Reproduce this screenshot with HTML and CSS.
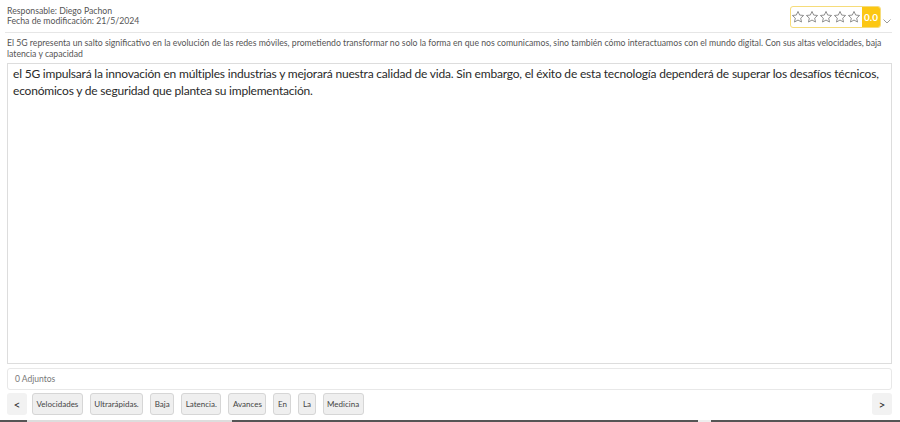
FILE: index.html
```html
<!DOCTYPE html>
<html lang="es">

<head>
    <meta charset="utf-8">
    <meta name="viewport" content="width=device-width, initial-scale=1.0">
    <title>Documento</title>
    <link rel="stylesheet" href="styles.css">
</head>

<body>
    <main class="ficha">
        <header class="cabecera">
            <div class="meta">
                <p>Responsable: Diego Pachon</p>
                <p>Fecha de modificación: 21/5/2024</p>
            </div>
            <div class="valoracion">
                <div class="estrellas">
                    <svg viewBox="0 0 24 24"><path d="M12 2.5l2.9 6.2 6.7.7-5 4.6 1.4 6.6L12 17.2l-6 3.4 1.4-6.6-5-4.6 6.7-.7z"/></svg>
                    <svg viewBox="0 0 24 24"><path d="M12 2.5l2.9 6.2 6.7.7-5 4.6 1.4 6.6L12 17.2l-6 3.4 1.4-6.6-5-4.6 6.7-.7z"/></svg>
                    <svg viewBox="0 0 24 24"><path d="M12 2.5l2.9 6.2 6.7.7-5 4.6 1.4 6.6L12 17.2l-6 3.4 1.4-6.6-5-4.6 6.7-.7z"/></svg>
                    <svg viewBox="0 0 24 24"><path d="M12 2.5l2.9 6.2 6.7.7-5 4.6 1.4 6.6L12 17.2l-6 3.4 1.4-6.6-5-4.6 6.7-.7z"/></svg>
                    <svg viewBox="0 0 24 24"><path d="M12 2.5l2.9 6.2 6.7.7-5 4.6 1.4 6.6L12 17.2l-6 3.4 1.4-6.6-5-4.6 6.7-.7z"/></svg>
                </div>
                <span class="nota">0.0</span>
            </div>
            <svg class="flecha" viewBox="0 0 10 10"><path d="M1.5 3.5l3.5 3.5 3.5-3.5"/></svg>
        </header>

        <p class="resumen">El 5G representa un salto significativo en la evolución de las redes móviles, prometiendo transformar no solo la forma en que nos comunicamos, sino también cómo interactuamos con el mundo digital. Con sus altas velocidades, baja latencia y capacidad</p>

        <div class="texto">el 5G impulsará la innovación en múltiples industrias y mejorará nuestra calidad de vida. Sin embargo, el éxito de esta tecnología dependerá de superar los desafíos técnicos, económicos y de seguridad que plantea su implementación.</div>

        <div class="adjuntos">0 Adjuntos</div>

        <nav class="etiquetas">
            <button class="paso">&lt;</button>
            <div class="lista">
                <button>Velocidades</button>
                <button>Ultrarápidas.</button>
                <button>Baja</button>
                <button>Latencia.</button>
                <button>Avances</button>
                <button>En</button>
                <button>La</button>
                <button>Medicina</button>
            </div>
            <button class="paso">&gt;</button>
        </nav>
    </main>
    <div class="kant"></div>
</body></html>
```

FILE: styles.css
```css
body {
    margin: 0;
    background-color: white;
    font-family: "Lato", "Noto Sans", sans-serif;
    color: #555;
}

.ficha {
    padding: 5px 8px 0 7px;
    height: 415px;
    box-sizing: border-box;
    display: flex;
    flex-direction: column;
}

.cabecera {
    display: flex;
    align-items: flex-start;
    border-bottom: 1px solid #e6e6e6;
    padding-bottom: 4px;
    margin-left: -2px;
    padding-left: 2px;
}

.meta {
    flex: 1;
    padding-top: 1px;
}

.meta p {
    margin: 0;
    font-size: 8.7px;
    line-height: 10px;
}

.valoracion {
    display: flex;
    margin-top: 1px;
    margin-right: 1px;
    border: 1px solid #f6dc7a;
    border-radius: 3px;
    height: 20px;
    overflow: hidden;
}

.estrellas {
    display: flex;
    align-items: center;
    padding: 0 1px 0 0;
}

.estrellas svg {
    width: 14px;
    height: 14px;
    fill: none;
    stroke: #888;
    stroke-width: 1.6;
    stroke-linejoin: round;
}

.nota {
    background-color: #fcc713;
    color: white;
    font-size: 10px;
    font-weight: bold;
    padding: 0 2px;
    line-height: 20px;
}

.flecha {
    width: 10px;
    height: 10px;
    margin-top: 11px;
    fill: none;
    stroke: #999;
    stroke-width: 1;
}

.resumen {
    margin: 4px 0 0;
    font-size: 8.7px;
    line-height: 11px;
}

.texto {
    flex: 1;
    margin-top: 4px;
    border: 1px solid #ddd;
    padding: 1px 5px;
    font-size: 12px;
    letter-spacing: -0.2px;
    line-height: 17px;
    color: #2a2a2a;
}

.adjuntos {
    margin-top: 4px;
    border: 1px solid #e8e8e8;
    border-radius: 3px;
    height: 20px;
    padding-left: 7px;
    font-size: 8.5px;
    line-height: 20px;
    color: #777;
}

.etiquetas {
    display: flex;
    justify-content: space-between;
    margin-top: 3px;
    height: 22px;
}

.lista {
    flex: 1;
    display: flex;
    gap: 7px;
    padding-left: 5px;
}

button {
    font-family: "Lato", sans-serif;
    font-size: 8px;
    color: #444;
    background-color: #efefef;
    border: 1px solid #d6d6d6;
    border-radius: 3px;
    padding: 0 3.5px;
    margin: 0;
}

.paso {
    width: 20px;
    border: none;
    background-color: #f2f2f2;
    font-size: 12px;
    color: #333;
}

.kant {
    height: 2px;
    margin-top: 5px;
    background: linear-gradient(to right, #555 27px, #ddd 27px, #ddd 232px, #555 232px, #555 698px, #eee 698px, #eee 711px, #555 711px);
}
```
